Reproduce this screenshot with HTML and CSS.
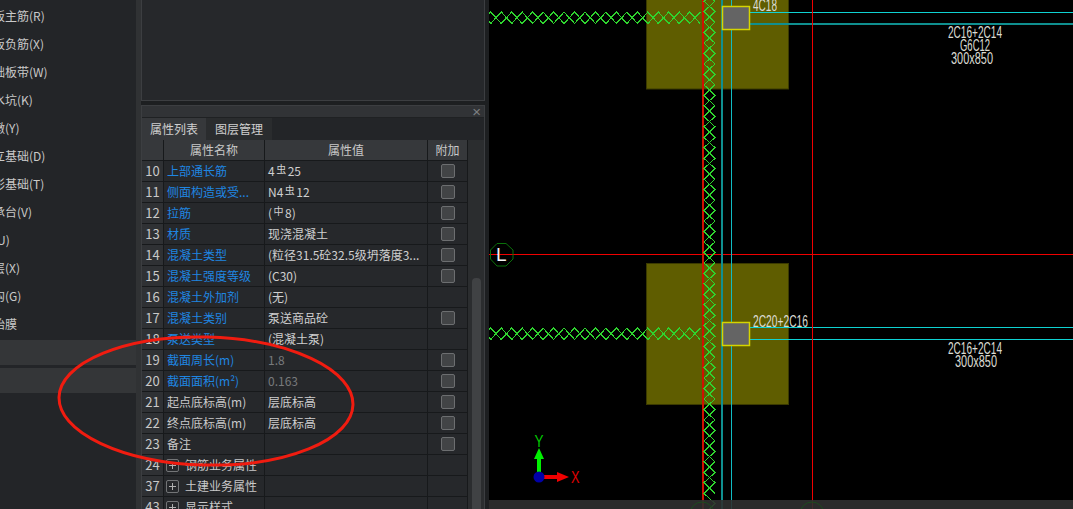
FILE: index.html
```html
<!DOCTYPE html>
<html lang="zh">
<head>
<meta charset="utf-8">
<title>属性列表</title>
<link rel="stylesheet" href="styles.css">
</head>
<body>
<div class="app">
  <nav class="menu">
    <ul class="menu-list">
      <li><span>筏板主筋(R)</span></li>
      <li><span>筏板负筋(X)</span></li>
      <li><span>基础板带(W)</span></li>
      <li><span>集水坑(K)</span></li>
      <li><span>柱墩(Y)</span></li>
      <li><span>独立基础(D)</span></li>
      <li><span>条形基础(T)</span></li>
      <li><span>桩承台(V)</span></li>
      <li><span>桩(U)</span></li>
      <li><span>垫层(X)</span></li>
      <li><span>地沟(G)</span></li>
      <li><span>砖胎膜</span></li>
    </ul>
    <div class="menu-group"></div>
    <div class="menu-group"></div>
  </nav>

  <main class="side">
    <section class="top-panel"></section>
    <section class="prop-panel">
      <header class="title-bar"><span class="close">×</span></header>
      <div class="tabs">
        <div class="tab active">属性列表</div>
        <div class="tab">图层管理</div>
      </div>
      <div class="table-wrap">
        <div class="table">
          <div class="row head"><div></div><div>属性名称</div><div>属性值</div><div>附加</div></div>
          <div class="row"><div class="num">10</div><div class="name link">上部通长筋</div><div class="val">4<i class="steel">虫</i>25</div><div class="add"><b class="check"></b></div></div>
          <div class="row"><div class="num">11</div><div class="name link">侧面构造或受...</div><div class="val">N4<i class="steel">虫</i>12</div><div class="add"><b class="check"></b></div></div>
          <div class="row"><div class="num">12</div><div class="name link">拉筋</div><div class="val">(<i class="steel">中</i>8)</div><div class="add"><b class="check"></b></div></div>
          <div class="row"><div class="num">13</div><div class="name link">材质</div><div class="val">现浇混凝土</div><div class="add"><b class="check"></b></div></div>
          <div class="row"><div class="num">14</div><div class="name link">混凝土类型</div><div class="val">(粒径31.5砼32.5级坍落度3...</div><div class="add"><b class="check"></b></div></div>
          <div class="row"><div class="num">15</div><div class="name link">混凝土强度等级</div><div class="val">(C30)</div><div class="add"><b class="check"></b></div></div>
          <div class="row"><div class="num">16</div><div class="name link">混凝土外加剂</div><div class="val">(无)</div><div class="add"></div></div>
          <div class="row"><div class="num">17</div><div class="name link">混凝土类别</div><div class="val">泵送商品砼</div><div class="add"><b class="check"></b></div></div>
          <div class="row"><div class="num">18</div><div class="name link">泵送类型</div><div class="val">(混凝土泵)</div><div class="add"></div></div>
          <div class="row"><div class="num">19</div><div class="name link">截面周长(m)</div><div class="val muted">1.8</div><div class="add"><b class="check"></b></div></div>
          <div class="row"><div class="num">20</div><div class="name link">截面面积(m²)</div><div class="val muted">0.163</div><div class="add"><b class="check"></b></div></div>
          <div class="row"><div class="num">21</div><div class="name">起点底标高(m)</div><div class="val">层底标高</div><div class="add"><b class="check"></b></div></div>
          <div class="row"><div class="num">22</div><div class="name">终点底标高(m)</div><div class="val">层底标高</div><div class="add"><b class="check"></b></div></div>
          <div class="row"><div class="num">23</div><div class="name">备注</div><div class="val"></div><div class="add"><b class="check"></b></div></div>
          <div class="row"><div class="num">24</div><div class="name group"><b class="plus"></b>钢筋业务属性</div><div class="val"></div><div class="add"></div></div>
          <div class="row"><div class="num">37</div><div class="name group"><b class="plus"></b>土建业务属性</div><div class="val"></div><div class="add"></div></div>
          <div class="row"><div class="num">43</div><div class="name group"><b class="plus"></b>显示样式</div><div class="val"></div><div class="add"></div></div>
        </div>
        <div class="scroll"><div class="thumb"></div></div>
      </div>
    </section>
  </main>

  <div class="canvas">
    <svg class="cad" width="584" height="509" viewBox="489 0 584 509" xmlns="http://www.w3.org/2000/svg">
      <rect class="ground" x="489" y="0" width="584" height="509"/>

      <rect class="slab" x="646.5" y="-5" width="142" height="94"/>
      <rect class="slab" x="646.5" y="263.5" width="142" height="141"/>

      <line class="beam-dark" x1="750" y1="24" x2="1073" y2="24"/>
      <line class="beam-thin" x1="750" y1="12.5" x2="1073" y2="12.5"/>
      <line class="beam-thin" x1="750" y1="327.5" x2="1073" y2="327.5"/>
      <line class="beam-thin" x1="750" y1="339.5" x2="1073" y2="339.5"/>

      <line class="axis-wide" x1="703" y1="0" x2="703" y2="509"/>
      <line class="axis" x1="812.5" y1="0" x2="812.5" y2="509"/>
      <line class="axis" x1="489" y1="254.5" x2="1073" y2="254.5"/>

      <line class="beam-dark" x1="722" y1="0" x2="722" y2="509"/>
      <line class="beam-mid" x1="731.5" y1="0" x2="731.5" y2="509"/>

      <!-- rebar zigzag: two chains in antiphase, horizontal bands -->
      <path class="zig" d="M480.3 12 l10.47 11.5 10.47 -11.5 10.47 11.5 10.47 -11.5 10.47 11.5 10.47 -11.5 10.47 11.5 10.47 -11.5 10.47 11.5 10.47 -11.5 10.47 11.5 10.47 -11.5 10.47 11.5 10.47 -11.5 10.47 11.5 10.47 -11.5 10.47 11.5 10.47 -11.5 10.47 11.5 10.47 -11.5 10.47 11.5"/>
      <path class="zig" d="M480.3 23.5 l10.47 -11.5 10.47 11.5 10.47 -11.5 10.47 11.5 10.47 -11.5 10.47 11.5 10.47 -11.5 10.47 11.5 10.47 -11.5 10.47 11.5 10.47 -11.5 10.47 11.5 10.47 -11.5 10.47 11.5 10.47 -11.5 10.47 11.5 10.47 -11.5 10.47 11.5 10.47 -11.5 10.47 11.5 10.47 -11.5"/>
      <path class="zig" d="M480.3 328 l10.47 11.5 10.47 -11.5 10.47 11.5 10.47 -11.5 10.47 11.5 10.47 -11.5 10.47 11.5 10.47 -11.5 10.47 11.5 10.47 -11.5 10.47 11.5 10.47 -11.5 10.47 11.5 10.47 -11.5 10.47 11.5 10.47 -11.5 10.47 11.5 10.47 -11.5 10.47 11.5 10.47 -11.5 10.47 11.5"/>
      <path class="zig" d="M480.3 339.5 l10.47 -11.5 10.47 11.5 10.47 -11.5 10.47 11.5 10.47 -11.5 10.47 11.5 10.47 -11.5 10.47 11.5 10.47 -11.5 10.47 11.5 10.47 -11.5 10.47 11.5 10.47 -11.5 10.47 11.5 10.47 -11.5 10.47 11.5 10.47 -11.5 10.47 11.5 10.47 -11.5 10.47 11.5 10.47 -11.5"/>

      <!-- rebar zigzag: vertical band -->
      <path class="zig" d="M704 -9.3 l11 10.47 -11 10.47 11 10.47 -11 10.47 11 10.47 -11 10.47 11 10.47 -11 10.47 11 10.47 -11 10.47 11 10.47 -11 10.47 11 10.47 -11 10.47 11 10.47 -11 10.47 11 10.47 -11 10.47 11 10.47 -11 10.47 11 10.47 -11 10.47 11 10.47 -11 10.47 11 10.47 -11 10.47 11 10.47 -11 10.47 11 10.47 -11 10.47 11 10.47 -11 10.47 11 10.47 -11 10.47 11 10.47 -11 10.47 11 10.47 -11 10.47 11 10.47 -11 10.47 11 10.47 -11 10.47 11 10.47 -11 10.47 11 10.47 -11 10.47 11 10.47 -11 10.47 11 10.47 -11 10.47 11 10.47 -11 10.47"/>
      <path class="zig" d="M715 -9.3 l-11 10.47 11 10.47 -11 10.47 11 10.47 -11 10.47 11 10.47 -11 10.47 11 10.47 -11 10.47 11 10.47 -11 10.47 11 10.47 -11 10.47 11 10.47 -11 10.47 11 10.47 -11 10.47 11 10.47 -11 10.47 11 10.47 -11 10.47 11 10.47 -11 10.47 11 10.47 -11 10.47 11 10.47 -11 10.47 11 10.47 -11 10.47 11 10.47 -11 10.47 11 10.47 -11 10.47 11 10.47 -11 10.47 11 10.47 -11 10.47 11 10.47 -11 10.47 11 10.47 -11 10.47 11 10.47 -11 10.47 11 10.47 -11 10.47 11 10.47 -11 10.47 11 10.47"/>

      <rect class="col" x="722.5" y="6.5" width="27" height="23"/>
      <rect class="col" x="722.5" y="322.5" width="27" height="23"/>

      <text class="cad-text" x="753" y="11" textLength="24" lengthAdjust="spacingAndGlyphs">4C18</text>
      <text class="cad-text" x="948" y="38" textLength="54" lengthAdjust="spacingAndGlyphs">2C16+2C14</text>
      <text class="cad-text" x="960" y="51" textLength="30" lengthAdjust="spacingAndGlyphs">G6C12</text>
      <text class="cad-text" x="951" y="64" textLength="42" lengthAdjust="spacingAndGlyphs">300x850</text>
      <text class="cad-text" x="753" y="327" textLength="55" lengthAdjust="spacingAndGlyphs">2C20+2C16</text>
      <text class="cad-text" x="948" y="354" textLength="54" lengthAdjust="spacingAndGlyphs">2C16+2C14</text>
      <text class="cad-text" x="955" y="367" textLength="42" lengthAdjust="spacingAndGlyphs">300x850</text>

      <polygon class="bubble" points="497,243.5 506,243.5 513,250 513,259 506,266 497,266 490.5,259 490.5,250"/>
      <text class="bubble-text" x="496" y="261">L</text>

      <line class="arrow-g" x1="539" y1="477" x2="539" y2="456"/>
      <polygon class="fill-g" points="539,448 544,459 534,459"/>
      <line class="arrow-r" x1="539" y1="477" x2="558" y2="477"/>
      <polygon class="fill-r" points="569,477 557,472 557,482"/>
      <circle class="origin" cx="539" cy="477" r="5.5"/>
      <text class="label-y" x="534.5" y="447" textLength="9" lengthAdjust="spacingAndGlyphs">Y</text>
      <text class="label-x" x="571" y="483" textLength="8.5" lengthAdjust="spacingAndGlyphs">X</text>

      <rect class="strip" x="489" y="500" width="584" height="9"/>
      <circle class="bubble-dim" cx="702" cy="514" r="12"/>
      <circle class="bubble-dim" cx="812" cy="514" r="12"/>
    </svg>
  </div>
</div>

<svg class="mark" width="1073" height="509" viewBox="0 0 1073 509" xmlns="http://www.w3.org/2000/svg">
  <ellipse class="mark-line" cx="206" cy="401" rx="147" ry="64" transform="rotate(1.5 206 401)"/>
</svg>
</body>
</html>
```

FILE: styles.css
```css
* { box-sizing: border-box; }

html, body {
  margin: 0;
  padding: 0;
  height: 509px;
  overflow: hidden;
  background: #1d1f21;
}

body {
  position: relative;
  font-family: "Noto Sans CJK SC", "Noto Sans", sans-serif;
  font-size: 12px;
  color: #c9c9c9;
}

.app {
  display: flex;
  width: 1073px;
  height: 509px;
}

/* left menu */
.menu {
  width: 141px;
  flex: none;
  background: #232528;
  border-right: 5px solid #303234;
  overflow: hidden;
  padding-top: 2px;
}

.menu-list {
  list-style: none;
  margin: 0 0 2px;
  padding: 0;
}

.menu-list li {
  height: 28px;
  line-height: 28px;
  white-space: nowrap;
}

.menu-list span {
  display: block;
  margin-left: -19px;
}

.menu-group {
  height: 25px;
  margin-bottom: 3px;
  background: #343638;
}

/* middle column */
.side {
  width: 344px;
  flex: none;
  display: flex;
  flex-direction: column;
  gap: 4px;
}

.top-panel {
  height: 101px;
  flex: none;
  background: #26282b;
  border: 1px solid #3c3e41;
  border-top: 0;
}

.prop-panel {
  flex: 1;
  min-height: 0;
  background: #26282b;
  border: 1px solid #3c3e41;
  border-bottom: 0;
  overflow: hidden;
}

.title-bar {
  height: 11px;
  background: #313336;
  display: flex;
  justify-content: flex-end;
  align-items: center;
  padding-right: 3px;
}

.close {
  font-family: "Liberation Sans", sans-serif;
  font-size: 15px;
  line-height: 11px;
  color: #7d7f81;
}

.tabs {
  display: flex;
  height: 23px;
  border-top: 1px solid #1f2123;
  background: #232528;
}

.tab {
  width: 66px;
  text-align: center;
  line-height: 21px;
  background: #2a2c2e;
  color: #cfcfcf;
}

.tab.active {
  width: 64px;
  background: #36383b;
}

.table-wrap {
  display: flex;
  height: 369px;
}

.table {
  width: 326px;
  flex: none;
}

.row {
  display: grid;
  grid-template-columns: 22px 101px 163px 40px;
  height: 21px;
  line-height: 20px;
  white-space: nowrap;
}

.row > div {
  border-right: 1px solid #17191b;
  border-bottom: 1px solid #17191b;
  overflow: hidden;
}

.row.head > div {
  background: #36383b;
  text-align: center;
}

.num {
  background: #2f3134;
  text-align: center;
  font-size: 13px;
}

.name { padding-left: 3px; }
.val { padding-left: 3px; color: #cfcfcf; }
.link { color: #1f86e2; }
.muted { color: #787a7c; }

.steel {
  font-style: normal;
  font-size: 10px;
  position: relative;
  top: -3px;
  margin: 0 1.5px;
}

.add {
  display: flex;
  align-items: center;
  justify-content: center;
}

.check {
  display: block;
  width: 14px;
  height: 14px;
  background: #424446;
  border: 1px solid #6c6e70;
  border-radius: 2px;
}

.group {
  display: flex;
  align-items: center;
  gap: 6px;
  padding-left: 2px;
}

.plus {
  flex: none;
  width: 13px;
  height: 13px;
  border: 1px solid #737577;
  border-radius: 2px;
  background:
    linear-gradient(#b0b0b0, #b0b0b0) center / 7px 1px no-repeat,
    linear-gradient(#b0b0b0, #b0b0b0) center / 1px 7px no-repeat;
}

.scroll {
  flex: 1;
  display: flex;
  flex-direction: column;
  justify-content: flex-end;
  padding: 0 3px 0 4px;
  background: #2b2d2f;
}

.thumb {
  height: 231px;
  background: #404244;
  border-radius: 4px 4px 0 0;
}

/* cad canvas */
.canvas {
  flex: 1;
  min-width: 0;
  margin-left: 4px;
  background: #000;
}

.cad { display: block; }

.ground { fill: #000; }
.slab { fill: #5f5d00; stroke: #3b3a00; stroke-width: 1; }
.axis { stroke: #f00000; stroke-width: 1; }
.axis-wide { stroke: #d01000; stroke-width: 2; }
.beam-thin { stroke: #0fd2d2; stroke-width: 1; }
.beam-mid { stroke: #10bcc4; stroke-width: 1; }
.beam-dark { stroke: #0f8f8f; stroke-width: 2; }
.zig { fill: none; stroke: #2fd42f; stroke-width: 1.2; shape-rendering: crispEdges; }
.col { fill: #646464; stroke: #d4d400; stroke-width: 1.5; }

.cad-text {
  font-family: "Liberation Sans", sans-serif;
  font-size: 17px;
  fill: #dcdcd4;
}

.bubble { fill: none; stroke: #0a700a; stroke-width: 1; }
.bubble-text { font-family: "Liberation Sans", sans-serif; font-size: 19px; fill: #f2f2f2; }
.bubble-dim { fill: none; stroke: #1d4a1d; stroke-width: 1; }

.arrow-g { stroke: #00f000; stroke-width: 4; }
.arrow-r { stroke: #f00000; stroke-width: 4; }
.fill-g { fill: #00f000; }
.fill-r { fill: #f00000; }
.origin { fill: #0000a8; }
.label-y { font-family: "Liberation Sans", sans-serif; font-size: 16px; fill: #00c800; }
.label-x { font-family: "Liberation Sans", sans-serif; font-size: 16px; fill: #e00000; }
.strip { fill: #303030; fill-opacity: 0.9; }

/* hand-drawn annotation on top of everything */
.mark {
  position: absolute;
  left: 0;
  top: 0;
  pointer-events: none;
}

.mark-line { fill: none; stroke: #f01c10; stroke-width: 3; }
```
